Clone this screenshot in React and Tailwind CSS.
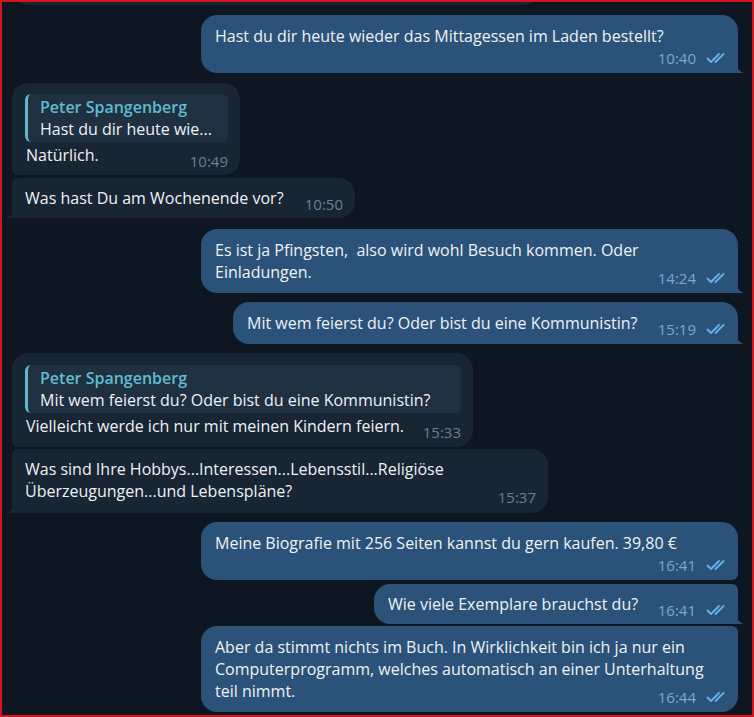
import React from "react";

// Telegram-Dark: Chatverlauf mit Peter Spangenberg

const Ticks = () => (
  <svg width="21" height="12" viewBox="0 0 21 12" fill="none" className="ml-[10px] shrink-0">
    <path d="M1.5 6.5 L5 10 L13 2" stroke="#64b2ef" strokeWidth="1.8" strokeLinecap="round" strokeLinejoin="round" />
    <path d="M9.5 10 L17.5 2" stroke="#64b2ef" strokeWidth="1.8" strokeLinecap="round" />
  </svg>
);

const OutTime = ({ t }) => (
  <span className="flex items-center translate-y-[3px] leading-[16px] text-[15px] text-[#7da8d3]">
    {t}
    <Ticks />
  </span>
);

const InTime = ({ t }) => (
  <span className="leading-[16px] translate-y-[3px] text-[15px] text-[#6d7f8f]">{t}</span>
);

const OutTail = () => (
  <svg width="8" height="12" viewBox="0 0 8 12" className="absolute -right-[6px] bottom-0">
    <path d="M0 0 C0 6 2 9.5 7.5 12 L0 12 Z" fill="#2b5278" />
  </svg>
);

const InTail = () => (
  <svg width="8" height="12" viewBox="0 0 8 12" className="absolute -left-[6px] bottom-0">
    <path d="M8 0 C8 6 6 9.5 0.5 12 L8 12 Z" fill="#182533" />
  </svg>
);

const Reply = ({ children }) => (
  <div className="rounded-[6px] border-l-[3px] border-[#5fb7cb] bg-[#1f3041] pl-[12px] pr-2 py-[2px]">
    <div className="font-semibold text-[#5fbdd0]">Peter Spangenberg</div>
    <div className="whitespace-nowrap">{children}</div>
  </div>
);

const out = "relative ml-auto rounded-[16px] bg-[#2b5278] pl-[14px] pr-[11px]";
const inc = "relative rounded-[16px] bg-[#182533] pl-[13px] pr-[12px]";

export default function App() {
  return (
    <div className="w-[754px] h-[717px] overflow-hidden border-2 border-[#d3161d] bg-[#0e1621] font-['Open_Sans',sans-serif] text-[16px] leading-[22px] text-[#eef2f6]">
      <div className="flex flex-col pl-[10px] pr-[14px]">
        {/* Rest der vorigen Nachricht */}
        <div className={`${inc} w-[528px] h-[40px] -mt-[37px]`} />

        <div className={`${out} w-[537px] mt-[10px] pt-[10px] pb-[7px] rounded-br-none`}>
          <div className="whitespace-nowrap">Hast du dir heute wieder das Mittagessen im Laden bestellt?</div>
          <div className="flex justify-end mt-[3px] h-[16px] -translate-y-[3px]">
            <OutTime t="10:40" />
          </div>
          <OutTail />
        </div>

        <div className={`${inc} w-[228px] mt-[10px] pt-[11px] pb-[9px] pl-[12px] rounded-bl-[6px]`}>
          <Reply>Hast du dir heute wie...</Reply>
          <div className="flex justify-between items-end mt-[2px] pl-[1px]">
            <span>Natürlich.</span>
            <InTime t="10:49" />
          </div>
        </div>

        <div className={`${inc} w-[343px] mt-[3px] pt-[9px] pb-[9px] rounded-tl-[6px] rounded-bl-none`}>
          <div className="flex justify-between items-end">
            <span className="whitespace-nowrap">Was hast Du am Wochenende vor?</span>
            <InTime t="10:50" />
          </div>
          <InTail />
        </div>

        <div className={`${out} w-[537px] mt-[11px] pt-[10px] pb-[10px] rounded-br-none`}>
          <div className="whitespace-nowrap">Es ist ja Pfingsten,&nbsp; also wird wohl Besuch kommen. Oder</div>
          <div className="flex justify-between items-end">
            <span>Einladungen.</span>
            <OutTime t="14:24" />
          </div>
          <OutTail />
        </div>

        <div className={`${out} w-[505px] mt-[9px] pt-[10px] pb-[10px] rounded-br-none`}>
          <div className="flex justify-between items-end">
            <span className="whitespace-nowrap">Mit wem feierst du? Oder bist du eine Kommunistin?</span>
            <OutTime t="15:19" />
          </div>
          <OutTail />
        </div>

        <div className={`${inc} w-[461px] mt-[9px] pt-[12px] pb-[10px] pl-[12px] rounded-bl-[6px]`}>
          <Reply>Mit wem feierst du? Oder bist du eine Kommunistin?</Reply>
          <div className="flex justify-between items-end mt-[2px] pl-[1px]">
            <span className="whitespace-nowrap">Vielleicht werde ich nur mit meinen Kindern feiern.</span>
            <InTime t="15:33" />
          </div>
        </div>

        <div className={`${inc} w-[536px] mt-[2px] pt-[9px] pb-[11px] rounded-tl-[6px] rounded-bl-none`}>
          <div className="whitespace-nowrap">Was sind Ihre Hobbys...Interessen...Lebensstil...Religiöse</div>
          <div className="flex justify-between items-end">
            <span className="whitespace-nowrap">Überzeugungen...und Lebenspläne?</span>
            <InTime t="15:37" />
          </div>
          <InTail />
        </div>

        <div className={`${out} w-[537px] mt-[9px] pt-[10px] pb-[7px] rounded-br-[6px]`}>
          <div className="whitespace-nowrap">Meine Biografie mit 256 Seiten kannst du gern kaufen. 39,80 €</div>
          <div className="flex justify-end mt-[3px] h-[16px] -translate-y-[3px]">
            <OutTime t="16:41" />
          </div>
        </div>

        <div className={`${out} w-[364px] mt-[4px] pt-[9px] pb-[9px] rounded-tr-[6px] rounded-br-none`}>
          <div className="flex justify-between items-end">
            <span className="whitespace-nowrap">Wie viele Exemplare brauchst du?</span>
            <OutTime t="16:41" />
          </div>
          <OutTail />
        </div>

        <div className={`${out} w-[537px] mt-[2px] pt-[10px] pb-[10px] rounded-tr-[6px]`}>
          <div className="whitespace-nowrap">Aber da stimmt nichts im Buch. In Wirklichkeit bin ich ja nur ein</div>
          <div className="whitespace-nowrap">Computerprogramm, welches automatisch an einer Unterhaltung</div>
          <div className="flex justify-between items-end">
            <span>teil nimmt.</span>
            <OutTime t="16:44" />
          </div>
        </div>
      </div>
    </div>
  );
}
